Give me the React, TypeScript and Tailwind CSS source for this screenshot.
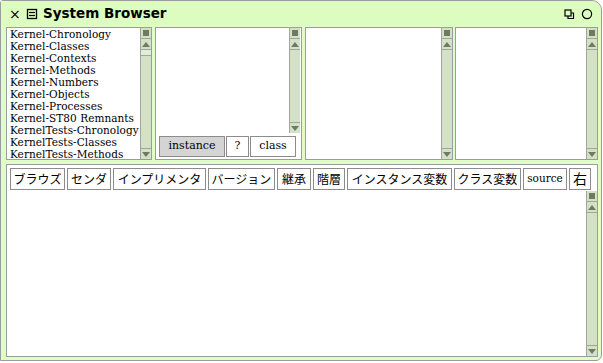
import React from "react";

const serif = { fontFamily: '"DejaVu Serif", "Liberation Serif", serif' };
const jp = { fontFamily: '"Noto Sans CJK JP", "Noto Sans", sans-serif' };

const packages = [
  "Kernel-Chronology",
  "Kernel-Classes",
  "Kernel-Contexts",
  "Kernel-Methods",
  "Kernel-Numbers",
  "Kernel-Objects",
  "Kernel-Processes",
  "Kernel-ST80 Remnants",
  "KernelTests-Chronology",
  "KernelTests-Classes",
  "KernelTests-Methods",
];

const tools: [string, number][] = [
  ["ブラウズ", 55],
  ["センダ", 44],
  ["インプリメンタ", 93],
  ["バージョン", 67],
  ["継承", 34],
  ["階層", 32],
  ["インスタンス変数", 105],
  ["クラス変数", 67],
];

function ScrollBar({ thumb }: { thumb?: boolean }) {
  return (
    <div className="w-[11px] h-full flex flex-col bg-[#d3e2c5] border-l border-[#a3a3a3] shrink-0">
      <div className="h-[11px] flex items-center justify-center border-b border-[#a3a3a3]">
        <div className="w-[6px] h-[6px] bg-[#6e7b62]" />
      </div>
      <div className="h-[11px] flex items-center justify-center border-b border-[#a3a3a3]">
        <div className="w-0 h-0 border-l-[4px] border-r-[4px] border-b-[5px] border-l-transparent border-r-transparent border-b-[#6e7b62]" />
      </div>
      {thumb && <div className="h-[6px] border-b border-[#a3a3a3] bg-[#e2ecd8]" />}
      <div className="flex-1" />
      <div className="h-[11px] flex items-center justify-center border-t border-[#a3a3a3]">
        <div className="w-0 h-0 border-l-[4px] border-r-[4px] border-t-[5px] border-l-transparent border-r-transparent border-t-[#6e7b62]" />
      </div>
    </div>
  );
}

export default function App() {
  return (
    <div className="w-[603px] h-[363px] bg-white">
      <div className="w-[602px] h-[361px] border border-[#9c9c9c] rounded-tr-[10px] rounded-br-[6px] rounded-tl-[3px] bg-[#e0fdc8] flex flex-col">
        {/* Title bar */}
        <div className="h-[25px] flex items-center pl-[8px] pr-[8px] bg-[#dcfcc0] rounded-tr-[10px]">
          <span className="text-[14px] leading-none text-black w-[16px]" style={{ fontFamily: '"DejaVu Sans", sans-serif' }}>
            ×
          </span>
          <svg width="12" height="12" viewBox="0 0 12 12" className="ml-[1px]">
            <rect x="1.5" y="1.5" width="9" height="9" fill="none" stroke="#000" strokeWidth="1.3" />
            <line x1="3" y1="4.5" x2="9" y2="4.5" stroke="#000" strokeWidth="1.2" />
            <line x1="3" y1="7.5" x2="9" y2="7.5" stroke="#000" strokeWidth="1.2" />
          </svg>
          <span className="ml-[5px] text-[13.5px] font-bold text-black" style={{ fontFamily: '"DejaVu Sans", sans-serif' }}>
            System Browser
          </span>
          <div className="flex-1" />
          <svg width="11" height="11" viewBox="0 0 11 11" className="mt-[1px]">
            <rect x="1" y="1" width="6" height="6" fill="none" stroke="#000" strokeWidth="1.2" />
            <path d="M4 7 V9.5 H9.5 V4 H7" fill="none" stroke="#000" strokeWidth="1.2" />
          </svg>
          <svg width="12" height="12" viewBox="0 0 12 12" className="ml-[6px] mt-[1px]">
            <circle cx="6" cy="6" r="4.6" fill="none" stroke="#000" strokeWidth="1.2" />
          </svg>
        </div>

        {/* Upper panes */}
        <div className="flex pl-[5px] mt-[1px] h-[133px]">
          <div className="w-[146px] h-full border border-[#9c9c9c] bg-white flex">
            <div
              className="flex-1 min-w-0 pl-[3px] overflow-hidden text-[10.5px] tracking-[0.05px] leading-[12px] text-black whitespace-nowrap"
              style={serif}
            >
              {packages.map((p) => (
                <div key={p}>{p}</div>
              ))}
            </div>
            <ScrollBar thumb />
          </div>

          <div className="w-[147px] h-full ml-[3px] border border-[#9c9c9c] bg-white flex flex-col">
            <div className="flex flex-1">
              <div className="flex-1" />
              <div className="pr-[1px] h-full">
                <ScrollBar />
              </div>
            </div>
            <div className="flex gap-[1px] pl-[3px] pb-[2px] pt-[3px] text-[11px] text-black" style={serif}>
              <div className="w-[66px] h-[21px] border border-[#8c8c8c] bg-[#d4d4d4] flex items-center justify-center">instance</div>
              <div className="w-[23px] h-[21px] border border-[#8c8c8c] bg-white flex items-center justify-center">?</div>
              <div className="w-[46px] h-[21px] border border-[#8c8c8c] bg-white flex items-center justify-center">class</div>
            </div>
          </div>

          <div className="w-[148px] h-full ml-[3px] border border-[#9c9c9c] bg-white flex">
            <div className="flex-1" />
            <ScrollBar />
          </div>

          <div className="w-[143px] h-full ml-[2px] border border-[#9c9c9c] bg-white flex">
            <div className="flex-1" />
            <ScrollBar />
          </div>
        </div>

        {/* Code pane */}
        <div className="ml-[5px] mt-[4px] w-[592px] h-[193px] border border-[#9c9c9c] bg-white flex flex-col">
          <div className="flex items-center gap-[2px] pl-[3px] pt-[2px] h-[25px] text-[12px] text-black">
            {tools.map(([t, w]) => (
              <div
                key={t}
                className="h-[22px] border border-[#8c8c8c] bg-white flex items-center justify-center whitespace-nowrap"
                style={{ ...jp, width: w }}
              >
                {t}
              </div>
            ))}
            <div className="h-[22px] w-[44px] border border-[#8c8c8c] bg-white flex items-center justify-center text-[10.5px]" style={serif}>
              source
            </div>
            <div className="h-[22px] w-[22px] border border-[#8c8c8c] bg-white flex items-center justify-center text-[14px]" style={jp}>
              右
            </div>
          </div>
          <div className="flex flex-1 mt-[1px]">
            <div className="flex-1" />
            <ScrollBar />
          </div>
        </div>
      </div>
    </div>
  );
}
